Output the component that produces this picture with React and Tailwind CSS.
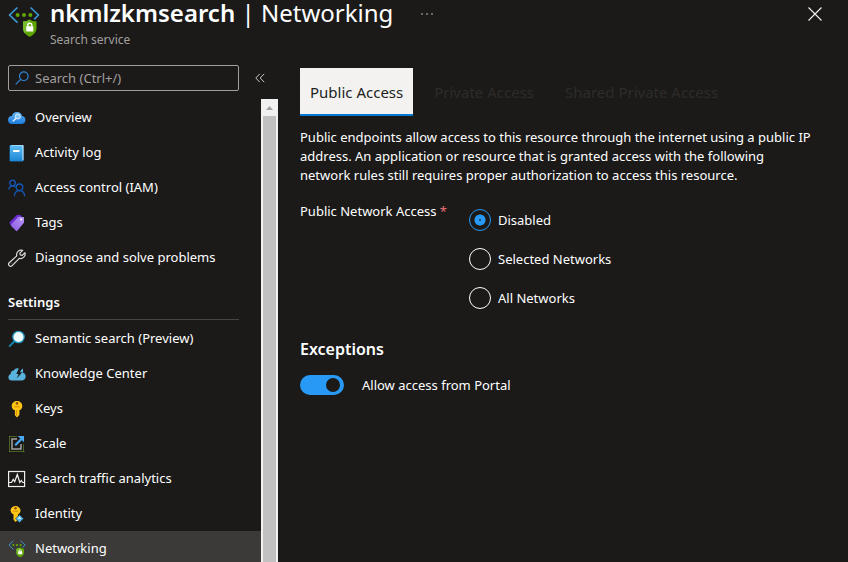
import { useState } from "react";

const font = "font-['Noto_Sans','Open_Sans',sans-serif]";

function NetworkIcon({ className }) {
  return (
    <svg viewBox="0 0 32 32" className={className} aria-hidden="true">
      <path d="M9.500 1.500 1.600 9l7.900 7.700M22.500 1.500 30.400 9l-4.200 4.300" fill="none" stroke="#3a96cf" strokeWidth="1.700" />
      <circle cx="9.600" cy="9" r="2" fill="#5ea500" />
      <circle cx="16" cy="9" r="2" fill="#5ea500" />
      <circle cx="22.400" cy="9" r="2" fill="#5ea500" />
      <path d="M15 15.500c3 0 4.800-.8 6.700-2 1.900 1.200 3.800 2 6.800 2v6.500c0 4.200-3.300 7.200-6.800 8.800-3.500-1.600-6.700-4.600-6.700-8.800z" fill="#5ea500" />
      <path d="M15 15.500c3 0 4.800-.8 6.700-2v8.500L17 27.500c-1.200-1.500-2-3.300-2-5.500z" fill="#76bc2d" />
      <path d="M19.800 20.500v-1.200a2 2 0 0 1 4 0v1.200" fill="none" stroke="#fff" strokeWidth="1.400" />
      <rect x="18.300" y="20.200" width="7" height="5.200" rx=".6" fill="#fff" />
    </svg>
  );
}

const box = { viewBox: "0 0 18 18", className: "size-[18px] shrink-0", "aria-hidden": true };

const icons = {
  overview: (
    <svg {...box}>
      <defs>
        <linearGradient id="cloud" x1="0" y1="0" x2="0" y2="1">
          <stop offset="0" stopColor="#63b6f5" />
          <stop offset="1" stopColor="#1b7bdc" />
        </linearGradient>
      </defs>
      <path d="M4.300 15a4 4 0 0 1-.4-8C4.500 4.500 6.600 3 9 3c2.700 0 4.700 1.700 5.100 4.100A4 4 0 0 1 14 15z" fill="url(#cloud)" />
      <circle cx="9.800" cy="7.500" r="2.500" fill="#83c6f8" stroke="#dff1ff" strokeWidth="1" />
      <path d="m7.900 9.400-2.700 2.700" stroke="#dff1ff" strokeWidth="1.400" strokeLinecap="round" />
    </svg>
  ),
  activity: (
    <svg {...box}>
      <defs>
        <linearGradient id="book" x1="0" y1="0" x2="0" y2="1">
          <stop offset="0" stopColor="#5dbdf5" />
          <stop offset="1" stopColor="#1c87d6" />
        </linearGradient>
      </defs>
      <rect x="1.500" y="1" width="14" height="16.500" rx="1" fill="#1470b8" />
      <rect x="3" y="1" width="12.500" height="15.500" rx=".8" fill="#d9effc" />
      <rect x="2" y="1.500" width="12.500" height="15.500" rx=".5" fill="url(#book)" />
      <rect x="5" y="6" width="6.500" height="2" rx=".4" fill="#fff" />
    </svg>
  ),
  people: (
    <svg {...box} fill="none" stroke="#1459b8" strokeWidth="1.300">
      <circle cx="4.500" cy="4" r="2.800" />
      <circle cx="11.500" cy="8.300" r="3.300" />
      <path d="M.7 10.500c.4-2.400 2-3.700 3.800-3.700 1.200 0 2.300.5 3 1.400M6.300 17.300c.3-3.500 2.500-5.700 5.200-5.700s4.900 2.200 5.200 5.700" />
    </svg>
  ),
  tags: (
    <svg {...box}>
      <defs>
        <linearGradient id="tag" x1="0" y1="1" x2="1" y2="0">
          <stop offset="0" stopColor="#8b5be0" />
          <stop offset="1" stopColor="#b796f9" />
        </linearGradient>
      </defs>
      <path d="M1.300 8.500 8.600 1.300c.4-.4.800-.6 1.300-.5l3.400.4v2L4.300 14z" fill="#6b2fd0" />
      <path d="m3.300 10.200 6.700-7c.4-.4.800-.6 1.300-.5l3.800.2c.6 0 .9.400.9.900v4.200c0 .5-.2.900-.5 1.200l-6.200 7.600c-.4.500-1 .5-1.500 0l-4.500-5a1 1 0 0 1 0-1.600z" fill="url(#tag)" />
      <circle cx="13.200" cy="5.400" r="1" fill="#fff" />
    </svg>
  ),
  wrench: (
    <svg {...box} fill="none" stroke="#dedcda" strokeWidth="1.200" strokeLinejoin="round">
      <path d="M14.700 1.400a4.500 4.500 0 0 0-5.900 5.500L1.200 13.700a2 2 0 0 0 2.900 2.900l7.200-7.300a4.500 4.500 0 0 0 5.600-5.600l-2.700 2.700-1.900-.5-.5-1.800z" />
      <circle cx="3.200" cy="14.700" r=".4" fill="#dedcda" stroke="none" />
    </svg>
  ),
  lens: (
    <svg {...box}>
      <path d="m6.700 11-5 5" stroke="#1583a8" strokeWidth="1.900" strokeLinecap="round" />
      <circle cx="10.500" cy="7" r="5.700" fill="#effcff" stroke="#2197bc" strokeWidth="1.300" />
    </svg>
  ),
  knowledge: (
    <svg {...box}>
      <path d="M3.800 15.500A3.500 3.500 0 0 1 .4 12.200c0-1.600 1-2.800 2.300-3.200a3 3 0 0 1 3-3.400A4.600 4.600 0 0 1 10.800 3.500L8.300 9h2.300l-1.900 4.500 5.600-6.300h-2.500l2.500-3.600c.7.500 1 1.300.8 2.300l-.3 1.800a4 4 0 0 1-.6 7.800z" fill="#58b2dc" />
    </svg>
  ),
  key: (
    <svg {...box}>
      <path d="M9 1c2.800 0 5.300 2.100 5.300 4.900 0 2-1.200 3.600-2.900 4.400v4.500L9.300 17.300h-.6l-1.800-2v-5A4.900 4.900 0 0 1 3.700 5.900C3.700 3.100 6.200 1 9 1z" fill="#ffc516" />
      <circle cx="9" cy="3.400" r="1.300" fill="#8a5200" />
      <path d="M6 6.800h6M8.400 10v5.500" stroke="#d78e00" strokeWidth="1" />
    </svg>
  ),
  scale: (
    <svg {...box} fill="none">
      <path d="M1.500 1.500h8M1.500 1.500v15M1.500 16.500h14.800M15.500 16.500V9" stroke="#76a832" strokeWidth="1" strokeDasharray="1 1" />
      <path d="M9 4H4v10h9V9" stroke="#a5a3a1" strokeWidth="1.500" />
      <path d="M7.200 10.300 13.500 4" stroke="#4aa8f2" strokeWidth="2.200" />
      <path d="M9.800 1H16v6.200z" fill="#4aa8f2" />
    </svg>
  ),
  traffic: (
    <svg {...box} fill="none" stroke="#f0efee">
      <rect x=".6" y="1.500" width="16" height="15" strokeWidth="1.200" />
      <path d="M1 12.500h2.500l1.700-3 1.500 2.200 2.600-7.200 2.500 8 1.500-2 1.400 2h2" strokeWidth="1.200" />
    </svg>
  ),
  identity: (
    <svg {...box}>
      <path d="M7.500 1c2.700 0 5 2 5 4.500 0 1.700-1 3.200-2.600 4v5L8 16.700h-.7l-1.800-2V9.400A4.500 4.500 0 0 1 2.500 5.500C2.500 3 4.800 1 7.500 1z" fill="#ffc516" />
      <circle cx="7.500" cy="3.300" r="1.200" fill="#8a5200" />
      <path d="M5 6.200h5" stroke="#d78e00" />
      <path d="m11.500 9.700 4 4-4 4-4-4z" fill="#55b7e5" stroke="#1b1a19" strokeWidth=".5" />
      <path d="m11.500 11.500 2 2.200h-4z" fill="#d8f4ff" />
    </svg>
  ),
  network: <NetworkIcon className="size-[18px] shrink-0" />,
};

const general = [
  ["overview", "Overview"],
  ["activity", "Activity log"],
  ["people", "Access control (IAM)"],
  ["tags", "Tags"],
  ["wrench", "Diagnose and solve problems"],
];
const settings = [
  ["lens", "Semantic search (Preview)"],
  ["knowledge", "Knowledge Center"],
  ["key", "Keys"],
  ["scale", "Scale"],
  ["traffic", "Search traffic analytics"],
  ["identity", "Identity"],
  ["network", "Networking"],
];

function NavList({ items }) {
  return (
    <ul>
      {items.map(([icon, label]) => (
        <li key={label}>
          <a
            href="#"
            aria-current={label === "Networking" ? "page" : undefined}
            className="flex h-[35px] items-center gap-[9px] pl-2 whitespace-nowrap aria-[current=page]:bg-[#3b3a39]"
          >
            {icons[icon]}
            {label}
          </a>
        </li>
      ))}
    </ul>
  );
}

export default function App() {
  const [access, setAccess] = useState("Disabled");
  const [portal, setPortal] = useState(true);

  return (
    <div className={`flex h-screen flex-col overflow-hidden bg-[#1b1a19] text-[13px] leading-[19px] text-white ${font}`}>
      <header className="flex h-[65px] shrink-0 items-start pr-[26px] pl-2">
        <NetworkIcon className="mt-[6px] size-8 shrink-0" />
        <div className="ml-[10px] min-w-0">
          <h1 className="text-2xl leading-[26px] whitespace-nowrap">
            <span className="font-semibold">nkmlzkmsearch</span> | Networking
          </h1>
          <p className="mt-1 text-xs leading-[19px] text-[#a19f9d]">Search service</p>
        </div>
        <button type="button" aria-label="More" className="mt-2 ml-7">
          <svg viewBox="0 0 12 12" className="size-3" fill="#d2d0ce">
            <circle cx="1" cy="6" r=".8" />
            <circle cx="6" cy="6" r=".8" />
            <circle cx="11" cy="6" r=".8" />
          </svg>
        </button>
        <button type="button" aria-label="Close" className="mt-[7px] ml-auto">
          <svg viewBox="0 0 14 14" className="size-[14px]" stroke="#f3f2f1" strokeWidth="1.100">
            <path d="m.5.5 13 13m0-13-13 13" />
          </svg>
        </button>
      </header>

      <div className="flex min-h-0 flex-1">
        <aside className="flex w-[278px] shrink-0 flex-col">
          <div className="flex shrink-0 items-center pb-2 pl-2">
            <label className="flex h-[26px] w-[231px] items-center gap-[6px] rounded-[2px] border border-[#a19f9d] px-[6px]">
              <svg viewBox="0 0 14 14" className="size-[14px] shrink-0" fill="none" stroke="#2f86d6" strokeWidth="1.200">
                <circle cx="8.800" cy="5.200" r="4.300" />
                <path d="M5.700 8.300.7 13.300" />
              </svg>
              <input
                type="text"
                aria-label="Search"
                placeholder="Search (Ctrl+/)"
                className="w-full min-w-0 bg-transparent outline-none placeholder:text-[#a19f9d]"
              />
            </label>
            <button type="button" aria-label="Collapse menu" className="ml-4">
              <svg viewBox="0 0 10 10" className="size-[10px]" fill="none" stroke="#c8c6c4">
                <path d="M4.800.8.8 5l4 4.200M9.200.8l-4 4.200 4 4.200" />
              </svg>
            </button>
          </div>
          <div className="flex min-h-0 flex-1">
            <nav className="min-w-0 flex-1 overflow-hidden pt-px">
              <NavList items={general} />
              <h2 className="mr-[22px] ml-2 h-[45px] border-b border-[#484644] pt-[18px] font-semibold">Settings</h2>
              <div className="pt-px">
                <NavList items={settings} />
              </div>
            </nav>
            <div className="flex w-[17px] flex-col bg-[#f1f1f1] px-[2px]" aria-hidden="true">
              <svg viewBox="0 0 13 17" className="h-[17px] w-[13px] shrink-0">
                <path d="M3 11h7L6.500 7z" fill="#a3a3a3" />
              </svg>
              <div className="flex-1 bg-[#c1c1c1]" />
            </div>
          </div>
        </aside>

        <main className="min-w-0 flex-1 pt-[3px] pr-[18px] pl-[22px]">
          <div role="tablist" className="flex h-12 gap-[11px] text-[15px] whitespace-nowrap">
            <button type="button" role="tab" aria-selected="true" className="border-b-2 border-[#0078d4] bg-[#f3f2f1] px-[10px] pt-[2px] text-[#201f1e]">
              Public Access
            </button>
            <button type="button" role="tab" aria-selected="false" className="px-[10px] text-[#2d2c2b]">
              Private Access
            </button>
            <button type="button" role="tab" aria-selected="false" className="px-[10px] text-[#2d2c2b]">
              Shared Private Access
            </button>
          </div>

          <p className="mt-3 max-w-[514px]">
            Public endpoints allow access to this resource through the internet using a public IP address. An application or resource that is granted access with the following network rules still requires proper authorization to access this resource.
          </p>

          <fieldset className="mt-[17px] flex">
            <legend className="float-left w-[169px]">
              Public Network Access <span className="text-[#f1707b]">*</span>
            </legend>
            <div className="flex flex-col gap-[17px] pt-[7px]">
              {["Disabled", "Selected Networks", "All Networks"].map((name) => (
                <label key={name} className="flex items-center gap-[7px]">
                  <input
                    type="radio"
                    name="access"
                    checked={access === name}
                    onChange={() => setAccess(name)}
                    className="size-[22px] appearance-none rounded-full border border-white checked:border-[#2899f5] checked:bg-[radial-gradient(circle,#1b1a19_0_0.5px,#2899f5_1px_5px,transparent_6px)]"
                  />
                  {name}
                </label>
              ))}
            </div>
          </fieldset>

          <h2 className="mt-[29px] text-base leading-[22px] font-semibold">Exceptions</h2>
          <label className="mt-[15px] flex items-center gap-[18px]">
            <input
              type="checkbox"
              role="switch"
              checked={portal}
              onChange={() => setPortal(!portal)}
              className="flex h-5 w-11 appearance-none items-center rounded-full bg-[#605e5c] px-1 before:size-[14px] before:rounded-full before:bg-[#1b1a19] checked:justify-end checked:bg-[#2899f5]"
            />
            Allow access from Portal
          </label>
        </main>
      </div>
    </div>
  );
}
